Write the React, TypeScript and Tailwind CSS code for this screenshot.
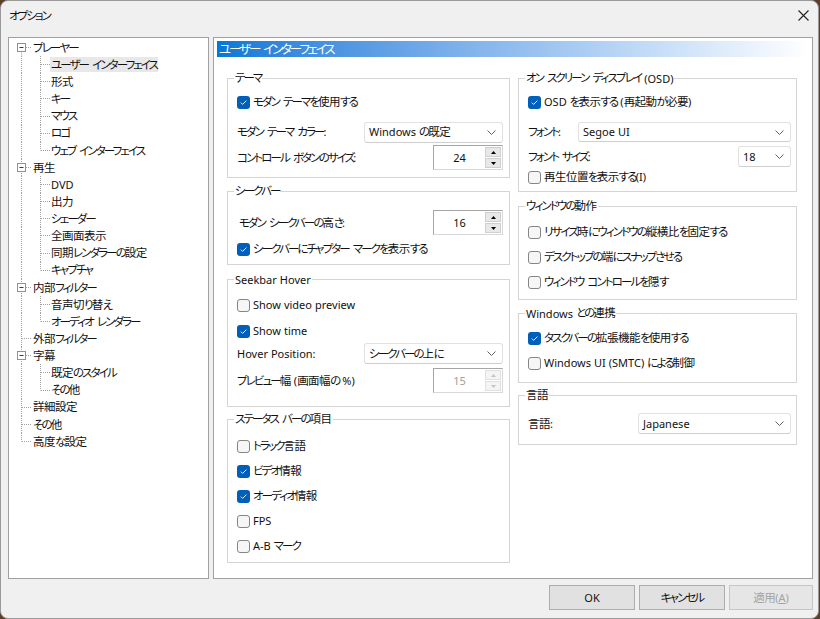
import React from 'react';

type TreeRow = { t: string; l: 0 | 1; kids?: boolean; first?: boolean; last?: boolean; lastKid?: boolean; sel?: boolean };

const tree: TreeRow[] = [
  { t: 'プレーヤー', l: 0, kids: true, first: true },
  { t: 'ユーザー インターフェイス', l: 1, sel: true },
  { t: '形式', l: 1 },
  { t: 'キー', l: 1 },
  { t: 'マウス', l: 1 },
  { t: 'ロゴ', l: 1 },
  { t: 'ウェブ インターフェイス', l: 1, lastKid: true },
  { t: '再生', l: 0, kids: true },
  { t: 'DVD', l: 1 },
  { t: '出力', l: 1 },
  { t: 'シェーダー', l: 1 },
  { t: '全画面表示', l: 1 },
  { t: '同期レンダラーの設定', l: 1 },
  { t: 'キャプチャ', l: 1, lastKid: true },
  { t: '内部フィルター', l: 0, kids: true },
  { t: '音声切り替え', l: 1 },
  { t: 'オーディオ レンダラー', l: 1, lastKid: true },
  { t: '外部フィルター', l: 0 },
  { t: '字幕', l: 0, kids: true },
  { t: '既定のスタイル', l: 1 },
  { t: 'その他', l: 1, lastKid: true },
  { t: '詳細設定', l: 0 },
  { t: 'その他', l: 0 },
  { t: '高度な設定', l: 0, last: true },
];

// latin / kana / kanji runs each get their own metrics (the original UI font has narrow kana)
const runCls = {
  sm: [
    "font-['Noto_Sans',sans-serif] text-[11px]",
    "font-['Noto_Sans_CJK_JP',sans-serif] text-[11.5px] tracking-[-1.9px] [font-feature-settings:'palt']",
    "font-['Noto_Sans_CJK_JP',sans-serif] text-[11.5px] tracking-[-0.5px] [font-feature-settings:'palt']",
  ],
  lg: [
    "font-['Noto_Sans',sans-serif] text-[12px]",
    "font-['Noto_Sans_CJK_JP',sans-serif] text-[12.5px] tracking-[-2.1px] [font-feature-settings:'palt']",
    "font-['Noto_Sans_CJK_JP',sans-serif] text-[12.5px] tracking-[-0.5px] [font-feature-settings:'palt']",
  ],
};

function kind(c: string) {
  if (c === ' ') return 3;
  if (/[\x21-\x7e]/.test(c)) return 0;
  if (/[\u4e00-\u9fff]/.test(c)) return 2;
  return 1;
}

// width of a space depends on what it sits between
function spaceCls(prev?: number, next?: number) {
  if (prev === 0 || next === 0) return 'inline-block w-[3px]';
  return 'inline-block w-[4px]';
}

function T({ s, big }: { s: string; big?: boolean }) {
  const runs: { k: number; t: string }[] = [];
  for (const c of s) {
    const k = kind(c);
    const prev = runs[runs.length - 1];
    if (prev && prev.k === k && k !== 3) prev.t += c;
    else runs.push({ k, t: c });
  }
  const set = big ? runCls.lg : runCls.sm;
  return (
    <>
      {runs.map((r, i) =>
        r.k === 3 ? (
          <span key={i} className={spaceCls(runs[i - 1]?.k, runs[i + 1]?.k)} />
        ) : (
          <span key={i} className={set[r.k]}>
            {r.t}
          </span>
        ),
      )}
    </>
  );
}

const dot = { stroke: '#a0a0a0', strokeDasharray: '1 1' };

function RootCell({ r }: { r: TreeRow }) {
  return (
    <svg width="19" height="17" className="shrink-0">
      <line x1="9.5" x2="9.5" y1={r.first ? 8.5 : 0} y2={r.last ? 8.5 : 17} {...dot} />
      <line x1="10" x2="19" y1="8.5" y2="8.5" {...dot} />
      {r.kids && (
        <>
          <rect x="5.5" y="4.5" width="8" height="8" fill="#fff" stroke="#919191" />
          <line x1="7.5" x2="11.5" y1="8.5" y2="8.5" stroke="#1f3f66" />
        </>
      )}
    </svg>
  );
}

function KidCells({ r }: { r: TreeRow }) {
  return (
    <>
      <svg width="19" height="17" className="shrink-0">
        <line x1="9.5" x2="9.5" y1="0" y2="17" {...dot} />
      </svg>
      <svg width="19" height="17" className="shrink-0">
        <line x1="9.5" x2="9.5" y1="0" y2={r.lastKid ? 8.5 : 17} {...dot} />
        <line x1="10" x2="19" y1="8.5" y2="8.5" {...dot} />
      </svg>
    </>
  );
}

function Check({ on, label, className = '' }: { on?: boolean; label: string; className?: string }) {
  return (
    <div className={`flex h-[20px] items-center ${className}`}>
      {on ? (
        <span className="flex h-[13px] w-[13px] shrink-0 items-center justify-center rounded-[3px] bg-[#005fb8]">
          <svg width="9" height="9" viewBox="0 0 9 9">
            <path d="M1.8 4.6 L3.6 6.4 L7.4 2.6" fill="none" stroke="#e8f1fb" strokeWidth="1" />
          </svg>
        </span>
      ) : (
        <span className="h-[13px] w-[13px] shrink-0 rounded-[3px] border border-[#858585] bg-[#f6f6f6]" />
      )}
      <span className="ml-[3px] whitespace-nowrap">
        <T s={label} />
      </span>
    </div>
  );
}

function Select({ value, className = '' }: { value: string; className?: string }) {
  return (
    <div
      className={`flex items-center justify-between rounded-[3px] border border-[#e1e1e1] border-b-[#cfcfcf] bg-white pl-[4px] pr-[6px] ${className}`}
    >
      <span className="whitespace-nowrap">
        <T s={value} />
      </span>
      <svg width="9" height="5" viewBox="0 0 9 5">
        <path d="M0.5 0.5 L4.5 4.5 L8.5 0.5" fill="none" stroke="#606060" />
      </svg>
    </div>
  );
}

function Spin({ value, disabled }: { value: string; disabled?: boolean }) {
  const arrow = disabled ? '#c4c4c4' : '#000';
  const btn = disabled ? 'border-[#e0e0e0] bg-[#f4f4f4]' : 'border-[#cfcfcf] bg-[#e8e8e8]';
  return (
    <div className="flex h-[25px] w-[70px] border border-[#d8d8d8] border-l-[#a6a6a6] border-t-[#a6a6a6] bg-white">
      <div className={`flex flex-1 items-center justify-center ${disabled ? 'text-[#a0a0a0]' : ''}`}>
        <T s={value} />
      </div>
      <div className="flex w-[17px] flex-col gap-[1px] py-[1px] pr-[1px]">
        <div className={`flex flex-1 items-center justify-center border ${btn}`}>
          <svg width="5" height="3" viewBox="0 0 5 3">
            <path d="M0 3 L2.5 0 L5 3 Z" fill={arrow} />
          </svg>
        </div>
        <div className={`flex flex-1 items-center justify-center border ${btn}`}>
          <svg width="5" height="3" viewBox="0 0 5 3">
            <path d="M0 0 L2.5 3 L5 0 Z" fill={arrow} />
          </svg>
        </div>
      </div>
    </div>
  );
}

// group box: the caption is pulled up so it sits on the top border
function Group({ title, className = '', inner = '', children }: { title: string; className?: string; inner?: string; children: React.ReactNode }) {
  return (
    <div className={`border border-[#d5d5d5] ${className}`}>
      <div className="-mt-[8px] ml-[6px] flex h-[14px] w-fit items-center whitespace-nowrap bg-white px-[1px]">
        <T s={title} />
      </div>
      <div className={inner}>{children}</div>
    </div>
  );
}

export default function App() {
  return (
    <div className="h-[619px] w-[820px] overflow-hidden bg-[#5b3f2c] text-[12px] leading-none text-[#111]">
      <div className="flex h-[619px] w-[819px] flex-col rounded-[8px] border border-[#9a9a9a] bg-[#f0f0f0]">
        {/* title bar */}
        <div className="flex h-[29px] shrink-0 items-center justify-between pl-[8px] pr-[9px]">
          <span>
            <T s="オプション" />
          </span>
          <svg width="11" height="11" viewBox="0 0 11 11">
            <path d="M0.5 0.5 L10.5 10.5 M10.5 0.5 L0.5 10.5" stroke="#222" strokeWidth="1.1" />
          </svg>
        </div>

        <div className="flex gap-[4px] pl-[7px] pt-[7px]">
          {/* tree */}
          <div className="h-[542px] w-[201px] shrink-0 border border-[#a0a0a0] bg-white pl-[3px] pt-[1px]">
            {tree.map((r, i) => (
              <div key={i} className="flex h-[17.13px] items-center">
                {r.l === 0 ? <RootCell r={r} /> : <KidCells r={r} />}
                <span
                  className={`flex h-[15px] items-center whitespace-nowrap ${r.l === 0 ? 'ml-[2px]' : 'px-[1px]'} ${r.sel ? 'bg-[#e8e8e8]' : ''}`}
                >
                  <T s={r.t} />
                </span>
              </div>
            ))}
          </div>

          {/* right page */}
          <div className="h-[542px] w-[600px] shrink-0 border border-[#a0a0a0] bg-white">
            <div className="mx-[3px] mt-[3px] flex h-[16px] items-center bg-linear-to-r from-[#0078d7] to-white pl-[2px] text-white">
              <T s="ユーザー インターフェイス" big />
            </div>

            <div className="flex gap-[8px] px-[13px] pt-[21px]">
              {/* left column */}
              <div className="w-[283px] shrink-0">
                <Group title="テーマ" inner="pl-[9px] pr-[6px] pt-[7px] pb-[7px]">
                  <Check on label="モダン テーマを使用する" />
                  <div className="mt-[10px] flex h-[20px] items-center justify-between">
                    <span><T s="モダン テーマ カラー:" /></span>
                    <Select value="Windows の既定" className="h-[21px] w-[139px]" />
                  </div>
                  <div className="mt-[3px] flex items-center justify-between">
                    <span><T s="コントロール ボタンのサイズ:" /></span>
                    <Spin value="24" />
                  </div>
                </Group>

                <Group title="シークバー" className="mt-[13px]" inner="pl-[9px] pr-[6px] pt-[12px] pb-[5px]">
                  <div className="flex items-center justify-between">
                    <span className="ml-[2px]"><T s="モダン シークバーの高さ:" /></span>
                    <Spin value="16" />
                  </div>
                  <Check on label="シークバーにチャプター マークを表示する" className="mt-[4px]" />
                </Group>

                <Group title="Seekbar Hover" className="mt-[14px]" inner="pl-[9px] pr-[6px] pt-[9px] pb-[13px]">
                  <Check label="Show video preview" />
                  <Check on label="Show time" className="mt-[6px]" />
                  <div className="mt-[2px] flex h-[21px] items-center justify-between">
                    <span><T s="Hover Position:" /></span>
                    <Select value="シークバーの上に" className="h-[21px] w-[139px]" />
                  </div>
                  <div className="mt-[4px] flex items-center justify-between">
                    <span><T s="プレビュー幅 (画面幅の %)" /></span>
                    <Spin value="15" disabled />
                  </div>
                </Group>

                <Group title="ステータス バーの項目" className="mt-[12px]" inner="pl-[9px] pr-[6px] pt-[10px] pb-[6px]">
                  <Check label="トラック言語" />
                  <Check on label="ビデオ情報" className="mt-[5px]" />
                  <Check on label="オーディオ情報" className="mt-[5px]" />
                  <Check label="FPS" className="mt-[5px]" />
                  <Check label="A-B マーク" className="mt-[5px]" />
                </Group>
              </div>

              {/* right column */}
              <div className="w-[279px] shrink-0">
                <Group title="オン スクリーン ディスプレイ (OSD)" inner="pl-[9px] pr-[5px] pt-[7px] pb-[4px]">
                  <Check on label="OSD を表示する (再起動が必要)" />
                  <div className="mt-[10px] flex h-[20px] items-center justify-between">
                    <span><T s="フォント:" /></span>
                    <Select value="Segoe UI" className="h-[20px] w-[213px]" />
                  </div>
                  <div className="mt-[4px] flex h-[21px] items-center justify-between">
                    <span><T s="フォント サイズ:" /></span>
                    <Select value="18" className="h-[21px] w-[53px]" />
                  </div>
                  <Check label="再生位置を表示する(I)" />
                </Group>

                <Group title="ウィンドウの動作" className="mt-[14px]" inner="pl-[9px] pr-[5px] pt-[9px] pb-[7px]">
                  <Check label="リサイズ時にウィンドウの縦横比を固定する" />
                  <Check label="デスクトップの端にスナップさせる" className="mt-[5px]" />
                  <Check label="ウィンドウ コントロールを隠す" className="mt-[5px]" />
                </Group>

                <Group title="Windows との連携" className="mt-[13px]" inner="pl-[9px] pr-[5px] pt-[8px] pb-[9px]">
                  <Check on label="タスクバーの拡張機能を使用する" />
                  <Check label="Windows UI (SMTC) による制御" className="mt-[5px]" />
                </Group>

                <Group title="言語" className="mt-[12px]" inner="pl-[9px] pr-[5px] pt-[11px] pb-[10px]">
                  <div className="flex h-[21px] items-center justify-between">
                    <span><T s="言語:" /></span>
                    <Select value="Japanese" className="h-[21px] w-[153px]" />
                  </div>
                </Group>
              </div>
            </div>
          </div>
        </div>

        {/* buttons */}
        <div className="mt-[6px] flex justify-end gap-[4px] pr-[5px]">
          <button className="h-[25px] w-[86px] border border-[#adadad] bg-[#e1e1e1]">
            <T s="OK" />
          </button>
          <button className="h-[25px] w-[86px] border border-[#adadad] bg-[#e1e1e1]">
            <T s="キャンセル" />
          </button>
          <button className="h-[25px] w-[84px] border border-[#c6c6c6] bg-[#e6e6e6] text-[#a3a3a3]">
            <T s="適用(" />
            <span className="font-['Noto_Sans',sans-serif] text-[11px] underline">A</span>
            <T s=")" />
          </button>
        </div>
      </div>
    </div>
  );
}
